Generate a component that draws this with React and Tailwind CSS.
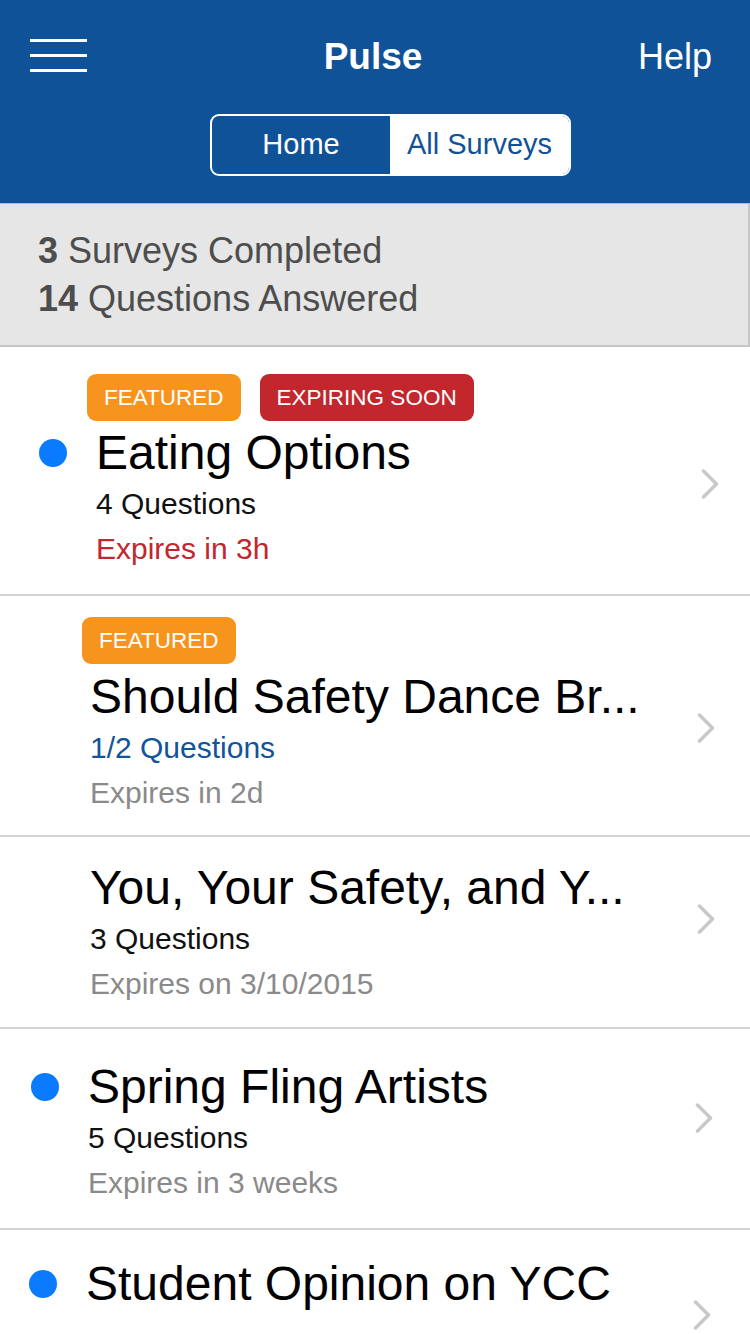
import React from 'react';

const surveys = [
  {
    id: 1,
    title: 'Eating Options',
    questions: '4 Questions',
    qColor: 'text-[#111111]',
    expires: 'Expires in 3h',
    eColor: 'text-[#c1272d]',
    dot: true,
    badges: ['featured', 'expiring'],
    pad: 'pl-[39px] pr-[31px] pt-[27px] pb-[23px]',
    badgeShift: 'ml-[48px] mb-[4px]',
  },
  {
    id: 2,
    title: 'Should Safety Dance Br...',
    questions: '1/2 Questions',
    qColor: 'text-[#12539a]',
    expires: 'Expires in 2d',
    eColor: 'text-[#8a8a8a]',
    dot: false,
    badges: ['featured'],
    pad: 'pl-[33px] pr-[35px] pt-[21px] pb-[20px]',
    badgeShift: 'ml-[49px] mb-[5px]',
  },
  {
    id: 3,
    title: 'You, Your Safety, and Y...',
    questions: '3 Questions',
    qColor: 'text-[#111111]',
    expires: 'Expires on 3/10/2015',
    eColor: 'text-[#8a8a8a]',
    dot: false,
    badges: [],
    pad: 'pl-[33px] pr-[35px] pt-[23px] pb-[21px]',
  },
  {
    id: 4,
    title: 'Spring Fling Artists',
    questions: '5 Questions',
    qColor: 'text-[#111111]',
    expires: 'Expires in 3 weeks',
    eColor: 'text-[#8a8a8a]',
    dot: true,
    badges: [],
    pad: 'pl-[31px] pr-[37px] pt-[30px] pb-[23px]',
  },
  {
    id: 5,
    title: 'Student Opinion on YCC',
    dot: true,
    badges: [],
    pad: 'pl-[29px] pr-[39px] pt-[26px] pb-[40px]',
  },
];

const Badge = ({ kind }) =>
  kind === 'featured' ? (
    <span className="h-[47px] px-[17px] flex items-center rounded-[9px] bg-[#f7941e] text-white text-[22.5px]">
      FEATURED
    </span>
  ) : (
    <span className="h-[47px] px-[17px] flex items-center rounded-[9px] bg-[#c1272d] text-white text-[22.5px]">
      EXPIRING SOON
    </span>
  );

const Chevron = () => (
  <svg width="18" height="30" viewBox="0 0 18 30" className="shrink-0 mt-[44px]">
    <polyline points="2.5,2 15.5,15 2.5,28" fill="none" stroke="#c7c7cc" strokeWidth="3.5" strokeLinecap="round" strokeLinejoin="round" />
  </svg>
);

const SurveyRow = ({ s }) => (
  <div className={`border-b-2 border-[#d3d3d3] ${s.pad}`}>
    {s.badges.length > 0 && (
      <div className={`flex gap-[19px] ${s.badgeShift}`}>
        {s.badges.map((b) => (
          <Badge key={b} kind={b} />
        ))}
      </div>
    )}
    <div className="flex items-start">
      <div className="w-[28px] h-[56px] mr-[29px] flex items-center shrink-0">
        {s.dot && <span className="block w-[28px] h-[28px] rounded-full bg-[#0a7aff]" />}
      </div>
      <div className="flex-1 min-w-0">
        <div className="text-[48px] leading-[56px] text-black whitespace-nowrap overflow-hidden">{s.title}</div>
        {s.questions && (
          <div className={`text-[30px] leading-[45px] ${s.qColor}`}>{s.questions}</div>
        )}
        {s.expires && <div className={`text-[30px] leading-[45px] ${s.eColor}`}>{s.expires}</div>}
      </div>
      <Chevron />
    </div>
  </div>
);

const App = () => {
  return (
    <div className="w-full h-screen overflow-hidden bg-white font-['Liberation_Sans',Arial,sans-serif]">
      {/* header */}
      <div className="h-[203px] bg-[#0f5298] pt-[22px]">
        <div className="h-[69px] pl-[30px] pr-[38px] grid grid-cols-[1fr_auto_1fr] items-center">
          <div className="flex flex-col gap-[12px] w-[57px] -mt-[3px]">
            <span className="block h-[3px] bg-white" />
            <span className="block h-[3px] bg-white" />
            <span className="block h-[3px] bg-white" />
          </div>
          <div className="text-white font-bold text-[37px] pl-[4px]">Pulse</div>
          <div className="text-white text-[36px] justify-self-end">Help</div>
        </div>
        <div className="mt-[23px] flex justify-center pl-[31px]">
          <div className="w-[361px] h-[62px] flex border-2 border-white rounded-[9px] overflow-hidden">
            <div className="w-[178px] flex items-center justify-center text-white text-[29px]">Home</div>
            <div className="flex-1 bg-white flex items-center justify-center text-[#0f5298] text-[29px]">All Surveys</div>
          </div>
        </div>
      </div>

      {/* summary */}
      <div className="bg-[#e6e6e6] border-t border-[#b9b9b9] border-b-2 border-r-2 border-b-[#c6c6c6] border-r-[#c6c6c6] pl-[38px] pt-[23px] pb-[22px] text-[36px] leading-[48px] text-[#4d4d4d]">
        <div>
          <span className="font-bold">3</span> Surveys Completed
        </div>
        <div>
          <span className="font-bold">14</span> Questions Answered
        </div>
      </div>

      {/* survey list */}
      {surveys.map((s) => (
        <SurveyRow key={s.id} s={s} />
      ))}
    </div>
  );
};

export default App;
